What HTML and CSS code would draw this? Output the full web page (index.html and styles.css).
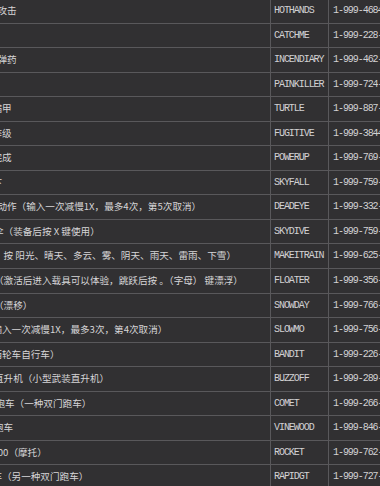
FILE: index.html
```html
<!DOCTYPE html>
<html lang="zh-CN">
<head>
<meta charset="utf-8">
<title>秘籍表</title>
<link rel="stylesheet" href="styles.css">
</head>
<body>
<div class="table">
  <div class="row"><div class="desc a">攻击</div><div class="code">HOTHANDS</div><div class="phone">1-999-4684-263</div></div>
  <div class="row"><div class="desc"></div><div class="code">CATCHME</div><div class="phone">1-999-228-2463</div></div>
  <div class="row"><div class="desc a">弹药</div><div class="code">INCENDIARY</div><div class="phone">1-999-462-363-4279</div></div>
  <div class="row"><div class="desc"></div><div class="code">PAINKILLER</div><div class="phone">1-999-724-654-5537</div></div>
  <div class="row"><div class="desc b">满甲</div><div class="code">TURTLE</div><div class="phone">1-999-887-853</div></div>
  <div class="row"><div class="desc b">等级</div><div class="code">FUGITIVE</div><div class="phone">1-999-3844-8483</div></div>
  <div class="row"><div class="desc b">完成</div><div class="code">POWERUP</div><div class="phone">1-999-769-3787</div></div>
  <div class="row"><div class="desc b">下</div><div class="code">SKYFALL</div><div class="phone">1-999-759-3255</div></div>
  <div class="row"><div class="desc a">动作（输入一次减慢1X，最多4次，第5次取消）</div><div class="code">DEADEYE</div><div class="phone">1-999-332-3393</div></div>
  <div class="row"><div class="desc c">伞（装备后按 X 键使用）</div><div class="code">SKYDIVE</div><div class="phone">1-999-759-3483</div></div>
  <div class="row"><div class="desc c">，按 阳光、晴天、多云、雾、阴天、雨天、雷雨、下雪）</div><div class="code">MAKEITRAIN</div><div class="phone">1-999-625-348-7246</div></div>
  <div class="row"><div class="desc c">（激活后进入载具可以体验，跳跃后按 。（字母） 键漂浮）</div><div class="code">FLOATER</div><div class="phone">1-999-356-2837</div></div>
  <div class="row"><div class="desc c">（漂移）</div><div class="code">SNOWDAY</div><div class="phone">1-999-766-9329</div></div>
  <div class="row"><div class="desc b">输入一次减慢1X，最多3次，第4次取消）</div><div class="code">SLOWMO</div><div class="phone">1-999-756-966</div></div>
  <div class="row"><div class="desc b">两轮车自行车）</div><div class="code">BANDIT</div><div class="phone">1-999-226-348</div></div>
  <div class="row"><div class="desc c">直升机（小型武装直升机）</div><div class="code">BUZZOFF</div><div class="phone">1-999-289-9633</div></div>
  <div class="row"><div class="desc d">跑车（一种双门跑车）</div><div class="code">COMET</div><div class="phone">1-999-266-38</div></div>
  <div class="row"><div class="desc c">跑车</div><div class="code">VINEWOOD</div><div class="phone">1-999-846-39663</div></div>
  <div class="row"><div class="desc b">600（摩托）</div><div class="code">ROCKET</div><div class="phone">1-999-762-538</div></div>
  <div class="row"><div class="desc b">车（另一种双门跑车）</div><div class="code">RAPIDGT</div><div class="phone">1-999-727-4348</div></div>
</div>
</body>
</html>
```

FILE: styles.css
```css
html, body {
  margin: 0;
  padding: 0;
  background: #313032;
  overflow: hidden;
}

.table {
  margin-top: -1px;
  width: 420px;
}

.row {
  display: flex;
  height: 24.56px;
  box-sizing: border-box;
  border-bottom: 1px solid #59585b;
}

.desc {
  flex: none;
  width: 271px;
  box-sizing: border-box;
  border-right: 1px solid #59585b;
  overflow: hidden;
  white-space: nowrap;
  font-family: "Noto Sans CJK SC", "Noto Sans", sans-serif;
  font-size: 9.6px;
  line-height: 23.56px;
  color: #d6d5d7;
}

.desc.a { text-indent: -2.6px; }
.desc.d { text-indent: -4.6px; }
.desc.c { text-indent: -6px; }
.desc.b { text-indent: -7.6px; }

.code, .phone {
  font-family: "Liberation Mono", "DejaVu Sans Mono", monospace;
  font-size: 10px;
  letter-spacing: -1.05px;
  line-height: 23.56px;
  color: #d2d1d3;
  white-space: nowrap;
}

.code {
  flex: none;
  width: 58px;
  box-sizing: border-box;
  padding-left: 3px;
  border-right: 1px solid #59585b;
}

.phone {
  flex: none;
  padding-left: 4px;
}
```
